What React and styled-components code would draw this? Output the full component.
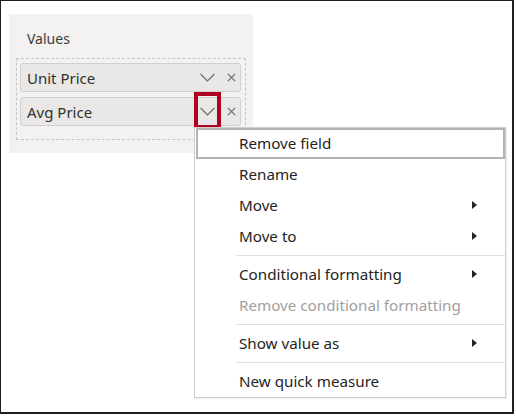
import React from 'react'
import styled, { createGlobalStyle } from 'styled-components'

const GlobalStyle = createGlobalStyle`
  html, body {
    margin: 0;
    padding: 0;
    background: #ffffff;
  }
  body {
    font-family: "Noto Sans", "Open Sans", sans-serif;
  }
`

const fields = ['Unit Price', 'Avg Price']

const menu = [
  { label: 'Remove field', active: true },
  { label: 'Rename' },
  { label: 'Move', sub: true },
  { label: 'Move to', sub: true },
  { sep: true },
  { label: 'Conditional formatting', sub: true },
  { label: 'Remove conditional formatting', disabled: true },
  { sep: true },
  { label: 'Show value as', sub: true },
  { sep: true },
  { label: 'New quick measure' },
]

function Chevron() {
  return (
    <svg width="15" height="9" viewBox="0 0 15 9">
      <path d="M0.6 1 L7.5 7.9 L14.4 1" fill="none" stroke="#6e6c6a" strokeWidth="1.2" />
    </svg>
  )
}

function Cross() {
  return (
    <svg width="9" height="9" viewBox="0 0 9 9">
      <path d="M0.8 0.8 L8.2 8.2 M8.2 0.8 L0.8 8.2" fill="none" stroke="#6e6c6a" strokeWidth="1.2" />
    </svg>
  )
}

export default function App() {
  return (
    <>
      <GlobalStyle />
      <Frame>
        <Panel>
          <Label>Values</Label>
          <DropZone>
            {fields.map(f => (
              <Field key={f}>
                <FieldName>{f}</FieldName>
                <Icons>
                  <Chevron />
                  <Cross />
                </Icons>
              </Field>
            ))}
          </DropZone>
        </Panel>
        <Callout />
        <Menu>
          {menu.map((m, i) =>
            m.sep ? (
              <Separator key={i} />
            ) : (
              <Item key={i} $active={m.active} $disabled={m.disabled}>
                <span>{m.label}</span>
                {m.sub && <SubArrow />}
              </Item>
            )
          )}
        </Menu>
      </Frame>
    </>
  )
}

const Frame = styled.div`
  position: relative;
  width: 514px;
  height: 414px;
  box-sizing: border-box;
  border: 2px solid #1e1e1e;
  border-left-width: 1px;
  border-top-width: 1px;
  padding: 13px 0 0 8px;
  background: #ffffff;
`

const Panel = styled.div`
  width: 244px;
  box-sizing: border-box;
  background: #f3f2f1;
  padding: 7px 7px 13px 7px;
`

const Label = styled.div`
  font-size: 14px;
  line-height: 20px;
  color: #3b3a39;
  margin: 8px 0 9px 11px;
`

const DropZone = styled.div`
  border: 1px dashed #c8c6c4;
  padding: 4px 4px 13px 3px;
  display: flex;
  flex-direction: column;
  gap: 5px;
`

const Field = styled.div`
  height: 29px;
  box-sizing: border-box;
  background: #e9e8e6;
  border: 1px solid #d2d0ce;
  border-radius: 3px;
  display: flex;
  align-items: center;
  justify-content: space-between;
  padding: 0 4px 0 6px;
`

const FieldName = styled.span`
  font-size: 15px;
  color: #323130;
`

const Icons = styled.div`
  display: flex;
  align-items: center;
  gap: 12px;
`

const Callout = styled.div`
  position: absolute;
  left: 193px;
  top: 91px;
  width: 27px;
  height: 37px;
  box-sizing: border-box;
  border: 4px solid #b00020;
`

const Menu = styled.div`
  position: absolute;
  left: 193px;
  top: 126px;
  width: 312px;
  box-sizing: border-box;
  background: #ffffff;
  border: 1px solid #cfcfcf;
  box-shadow: 1px 1px 0 #ececec;
  display: flex;
  flex-direction: column;
`

const Item = styled.div`
  height: 31px;
  box-sizing: border-box;
  display: flex;
  align-items: center;
  justify-content: space-between;
  padding: 0 28px 1px 43px;
  margin: 0 0 0 1px;
  font-size: 15.2px;
  color: ${p => (p.$disabled ? '#a19f9d' : '#252423')};
  box-shadow: ${p => (p.$active ? 'inset 0 0 0 2px #b4b4b4' : 'none')};
`

const SubArrow = styled.span`
  width: 0;
  height: 0;
  border-top: 4px solid transparent;
  border-bottom: 4px solid transparent;
  border-left: 5px solid #252423;
`

const Separator = styled.div`
  height: 7px;
  margin-left: 41px;
  display: flex;
  align-items: center;
  &::before {
    content: '';
    flex: 1;
    height: 1px;
    background: #e1dfdd;
  }
`
